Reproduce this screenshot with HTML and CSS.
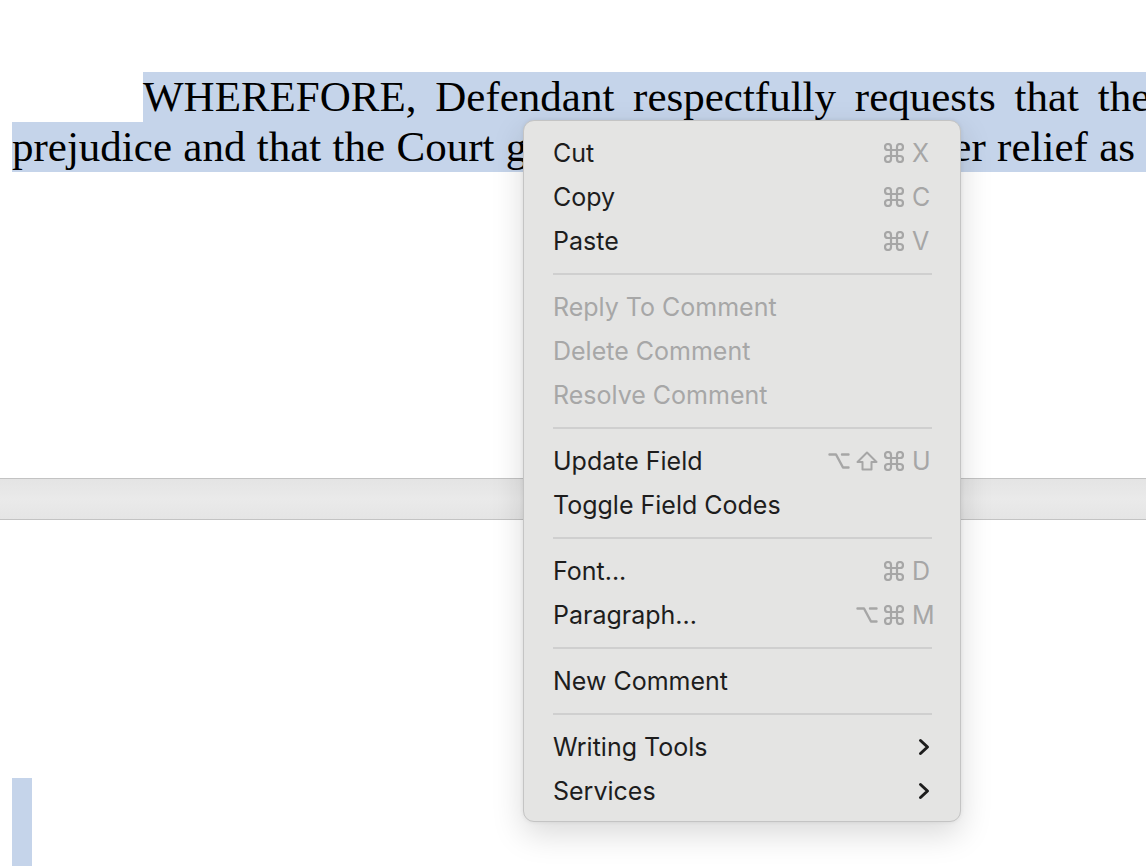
FILE: index.html
```html
<!DOCTYPE html>
<html lang="en">
<head>
<meta charset="utf-8">
<title>Document – context menu</title>
<link rel="stylesheet" href="styles.css">
</head>
<body>
<div class="doc">
  <section class="page page-top">
    <div class="para">
      <div class="line line-first">WHEREFORE, Defendant respectfully requests that the Complaint be dismissed with</div>
      <div class="line line-second">prejudice and that the Court grant such other and further relief as may be just and proper.</div>
    </div>
  </section>
  <div class="page-break"></div>
  <section class="page page-bottom">
    <div class="empty-sel"></div>
  </section>
</div>

<div class="menu" role="menu">
  <div class="item"><span class="label">Cut</span><span class="keys"><span class="mods"><svg class="mod cmd" viewBox="2 2 20 20"><path d="M15 6v12a3 3 0 1 0 3-3H6a3 3 0 1 0 3 3V6a3 3 0 1 0-3 3h12a3 3 0 1 0-3-3z"/></svg></span><span class="key">X</span></span></div>
  <div class="item"><span class="label">Copy</span><span class="keys"><span class="mods"><svg class="mod cmd" viewBox="2 2 20 20"><path d="M15 6v12a3 3 0 1 0 3-3H6a3 3 0 1 0 3 3V6a3 3 0 1 0-3 3h12a3 3 0 1 0-3-3z"/></svg></span><span class="key">C</span></span></div>
  <div class="item"><span class="label">Paste</span><span class="keys"><span class="mods"><svg class="mod cmd" viewBox="2 2 20 20"><path d="M15 6v12a3 3 0 1 0 3-3H6a3 3 0 1 0 3 3V6a3 3 0 1 0-3 3h12a3 3 0 1 0-3-3z"/></svg></span><span class="key">V</span></span></div>
  <div class="sep"></div>
  <div class="item disabled"><span class="label">Reply To Comment</span></div>
  <div class="item disabled"><span class="label">Delete Comment</span></div>
  <div class="item disabled"><span class="label">Resolve Comment</span></div>
  <div class="sep"></div>
  <div class="item"><span class="label">Update Field</span><span class="keys"><span class="mods"><svg class="mod opt" viewBox="0 0 22 18"><path d="M1.5 2.5h6.5l7 13h5.5M14 2.5h6.5"/></svg><svg class="mod shift" viewBox="0 0 22 20"><path d="M11 1.5L1.5 11h5v7.5h9V11h5z"/></svg><svg class="mod cmd" viewBox="2 2 20 20"><path d="M15 6v12a3 3 0 1 0 3-3H6a3 3 0 1 0 3 3V6a3 3 0 1 0-3 3h12a3 3 0 1 0-3-3z"/></svg></span><span class="key">U</span></span></div>
  <div class="item"><span class="label">Toggle Field Codes</span></div>
  <div class="sep"></div>
  <div class="item"><span class="label">Font...</span><span class="keys"><span class="mods"><svg class="mod cmd" viewBox="2 2 20 20"><path d="M15 6v12a3 3 0 1 0 3-3H6a3 3 0 1 0 3 3V6a3 3 0 1 0-3 3h12a3 3 0 1 0-3-3z"/></svg></span><span class="key">D</span></span></div>
  <div class="item"><span class="label">Paragraph...</span><span class="keys"><span class="mods"><svg class="mod opt" viewBox="0 0 22 18"><path d="M1.5 2.5h6.5l7 13h5.5M14 2.5h6.5"/></svg><svg class="mod cmd" viewBox="2 2 20 20"><path d="M15 6v12a3 3 0 1 0 3-3H6a3 3 0 1 0 3 3V6a3 3 0 1 0-3 3h12a3 3 0 1 0-3-3z"/></svg></span><span class="key">M</span></span></div>
  <div class="sep"></div>
  <div class="item"><span class="label">New Comment</span></div>
  <div class="sep"></div>
  <div class="item"><span class="label">Writing Tools</span><svg class="chev" viewBox="0 0 12 18"><path d="M2.5 2.5l7 6.5-7 6.5"/></svg></div>
  <div class="item"><span class="label">Services</span><svg class="chev" viewBox="0 0 12 18"><path d="M2.5 2.5l7 6.5-7 6.5"/></svg></div>
</div>
</body>
</html>
```

FILE: styles.css
```css
html, body {
  margin: 0;
  padding: 0;
  width: 1146px;
  height: 866px;
  overflow: hidden;
  background: #ffffff;
}

.doc {
  display: flex;
  flex-direction: column;
  height: 866px;
  overflow: hidden;
}

.page {
  background: #ffffff;
}

.page-top {
  flex: none;
  height: 478px;
  padding-top: 72px;
  box-sizing: border-box;
}

.para {
  padding-left: 12px;
  font-family: "Liberation Serif", "Times New Roman", serif;
  font-size: 43px;
  line-height: 50px;
  color: #000;
}

.line {
  white-space: nowrap;
  background: #c5d4ea;
  height: 50px;
}

.line-first {
  margin-left: 131px;
  word-spacing: 8px;
}

.line-second {
  word-spacing: 0.6px;
}

.page-break {
  flex: none;
  height: 40px;
  border-top: 1px solid #c3c3c3;
  border-bottom: 1px solid #c3c3c3;
  background: linear-gradient(#e4e4e4, #eaeaea 50%, #e5e5e5);
}

.page-bottom {
  flex: 1;
  min-height: 0;
  overflow: hidden;
  padding-top: 258px;
  padding-left: 12px;
}

.empty-sel {
  width: 20px;
  height: 100px;
  background: #c5d4ea;
}

/* Context menu */
.menu {
  position: absolute;
  left: 523px;
  top: 120px;
  width: 436px;
  padding: 10px 0 8px;
  background: #e4e4e3;
  border: 1px solid #c4c4c4;
  border-radius: 11px;
  box-shadow: 0 12px 32px rgba(0, 0, 0, 0.15), 0 0 4px rgba(0, 0, 0, 0.07);
  font-family: Inter, "Noto Sans", "Liberation Sans", sans-serif;
  font-size: 25px;
  color: #1d1d1d;
}

.item {
  height: 44px;
  display: flex;
  align-items: center;
  padding: 0 28px 0 29px;
}

.label {
  flex: 1;
  white-space: nowrap;
}

.item.disabled {
  color: #a7a7a7;
}

.keys {
  display: flex;
  align-items: center;
  color: #a6a6a6;
}

.mods {
  display: flex;
  align-items: center;
  gap: 6px;
}

.mod {
  fill: none;
  stroke: #a6a6a6;
  stroke-width: 2.2;
  stroke-linecap: round;
  stroke-linejoin: round;
}

.mod.cmd {
  width: 20px;
  height: 20px;
}

.mod.opt {
  width: 22px;
  height: 18px;
  stroke-width: 2.4;
}

.mod.shift {
  width: 22px;
  height: 20px;
  stroke-width: 2;
}

.key {
  width: 20px;
  margin-left: 8px;
  text-align: left;
}

.chev {
  width: 12px;
  height: 18px;
  margin-right: 2px;
  fill: none;
  stroke: #1d1d1d;
  stroke-width: 3;
  stroke-linecap: round;
  stroke-linejoin: round;
}

.sep {
  height: 2px;
  margin: 10px 28px 10px 29px;
  background: #cfcfcf;
}
```
